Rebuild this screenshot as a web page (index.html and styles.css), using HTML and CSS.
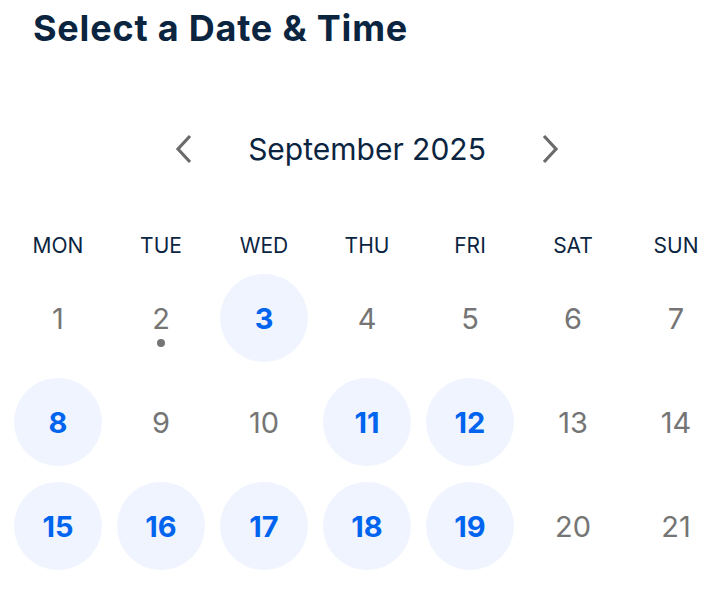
FILE: index.html
```html
<!DOCTYPE html>
<html lang="en">
<head>
<meta charset="utf-8">
<title>Select a Date &amp; Time</title>
<link rel="stylesheet" href="styles.css">
</head>
<body>
<main class="picker">
  <h1 class="title">Select a Date &amp; Time</h1>
  <div class="month-nav">
    <button class="nav-btn" aria-label="Previous month">
      <svg width="20" height="30" viewBox="0 0 20 30"><path d="M16 2 L4 15 L16 28" fill="none" stroke="currentColor" stroke-width="3.2"/></svg>
    </button>
    <div class="month-label">September 2025</div>
    <button class="nav-btn" aria-label="Next month">
      <svg width="20" height="30" viewBox="0 0 20 30"><path d="M4 2 L16 15 L4 28" fill="none" stroke="currentColor" stroke-width="3.2"/></svg>
    </button>
  </div>
  <div class="grid weekdays">
    <div class="wd">MON</div><div class="wd">TUE</div><div class="wd">WED</div><div class="wd">THU</div><div class="wd">FRI</div><div class="wd">SAT</div><div class="wd">SUN</div>
  </div>
  <div class="grid days">
    <div class="day">1</div>
    <div class="day today">2</div>
    <div class="day avail">3</div>
    <div class="day">4</div>
    <div class="day">5</div>
    <div class="day">6</div>
    <div class="day">7</div>
    <div class="day avail">8</div>
    <div class="day">9</div>
    <div class="day">10</div>
    <div class="day avail">11</div>
    <div class="day avail">12</div>
    <div class="day">13</div>
    <div class="day">14</div>
    <div class="day avail">15</div>
    <div class="day avail">16</div>
    <div class="day avail">17</div>
    <div class="day avail">18</div>
    <div class="day avail">19</div>
    <div class="day">20</div>
    <div class="day">21</div>
  </div>
</main>
</body>
</html>
```
FILE: styles.css
```css
* { box-sizing: border-box; }
html, body { margin: 0; padding: 0; background: #ffffff; }
body {
  font-family: "Inter", "Lato", sans-serif;
  color: #0b2541;
  width: 726px;
  height: 592px;
  overflow: hidden;
}
.picker {
  padding: 0 6px 0 14px;
}
.title {
  margin: 0;
  padding: 7px 0 0 19px;
  font-size: 36px;
  line-height: 42px;
  font-weight: 700;
  letter-spacing: 0.8px;
  color: #0b2541;
}
.month-nav {
  margin-top: 80px;
  height: 40px;
  display: flex;
  align-items: center;
  justify-content: center;
  gap: 54px;
  width: 706px;
}
.nav-btn {
  width: 20px;
  height: 40px;
  padding: 0;
  border: 0;
  background: none;
  color: #6b6b6b;
  display: flex;
  align-items: center;
  justify-content: center;
}
.month-label {
  font-size: 30px;
  font-weight: 400;
  color: #0b2541;
}
.grid {
  display: grid;
  grid-template-columns: repeat(7, 88px);
  column-gap: 15px;
  width: 706px;
}
.weekdays {
  margin-top: 62px;
  height: 30px;
  align-items: center;
}
.wd {
  text-align: center;
  font-size: 21px;
  line-height: 30px;
  color: #0b2541;
}
.days {
  margin-top: 13px;
  row-gap: 16px;
}
.day {
  position: relative;
  width: 88px;
  height: 88px;
  border-radius: 50%;
  display: flex;
  align-items: center;
  justify-content: center;
  font-size: 29px;
  color: #757575;
}
.day.avail {
  background: #eff4ff;
  color: #0064ef;
  font-weight: 700;
}
.day.today::after {
  content: "";
  position: absolute;
  left: 50%;
  top: 65px;
  width: 8px;
  height: 8px;
  margin-left: -4px;
  border-radius: 50%;
  background: #757575;
}
```
